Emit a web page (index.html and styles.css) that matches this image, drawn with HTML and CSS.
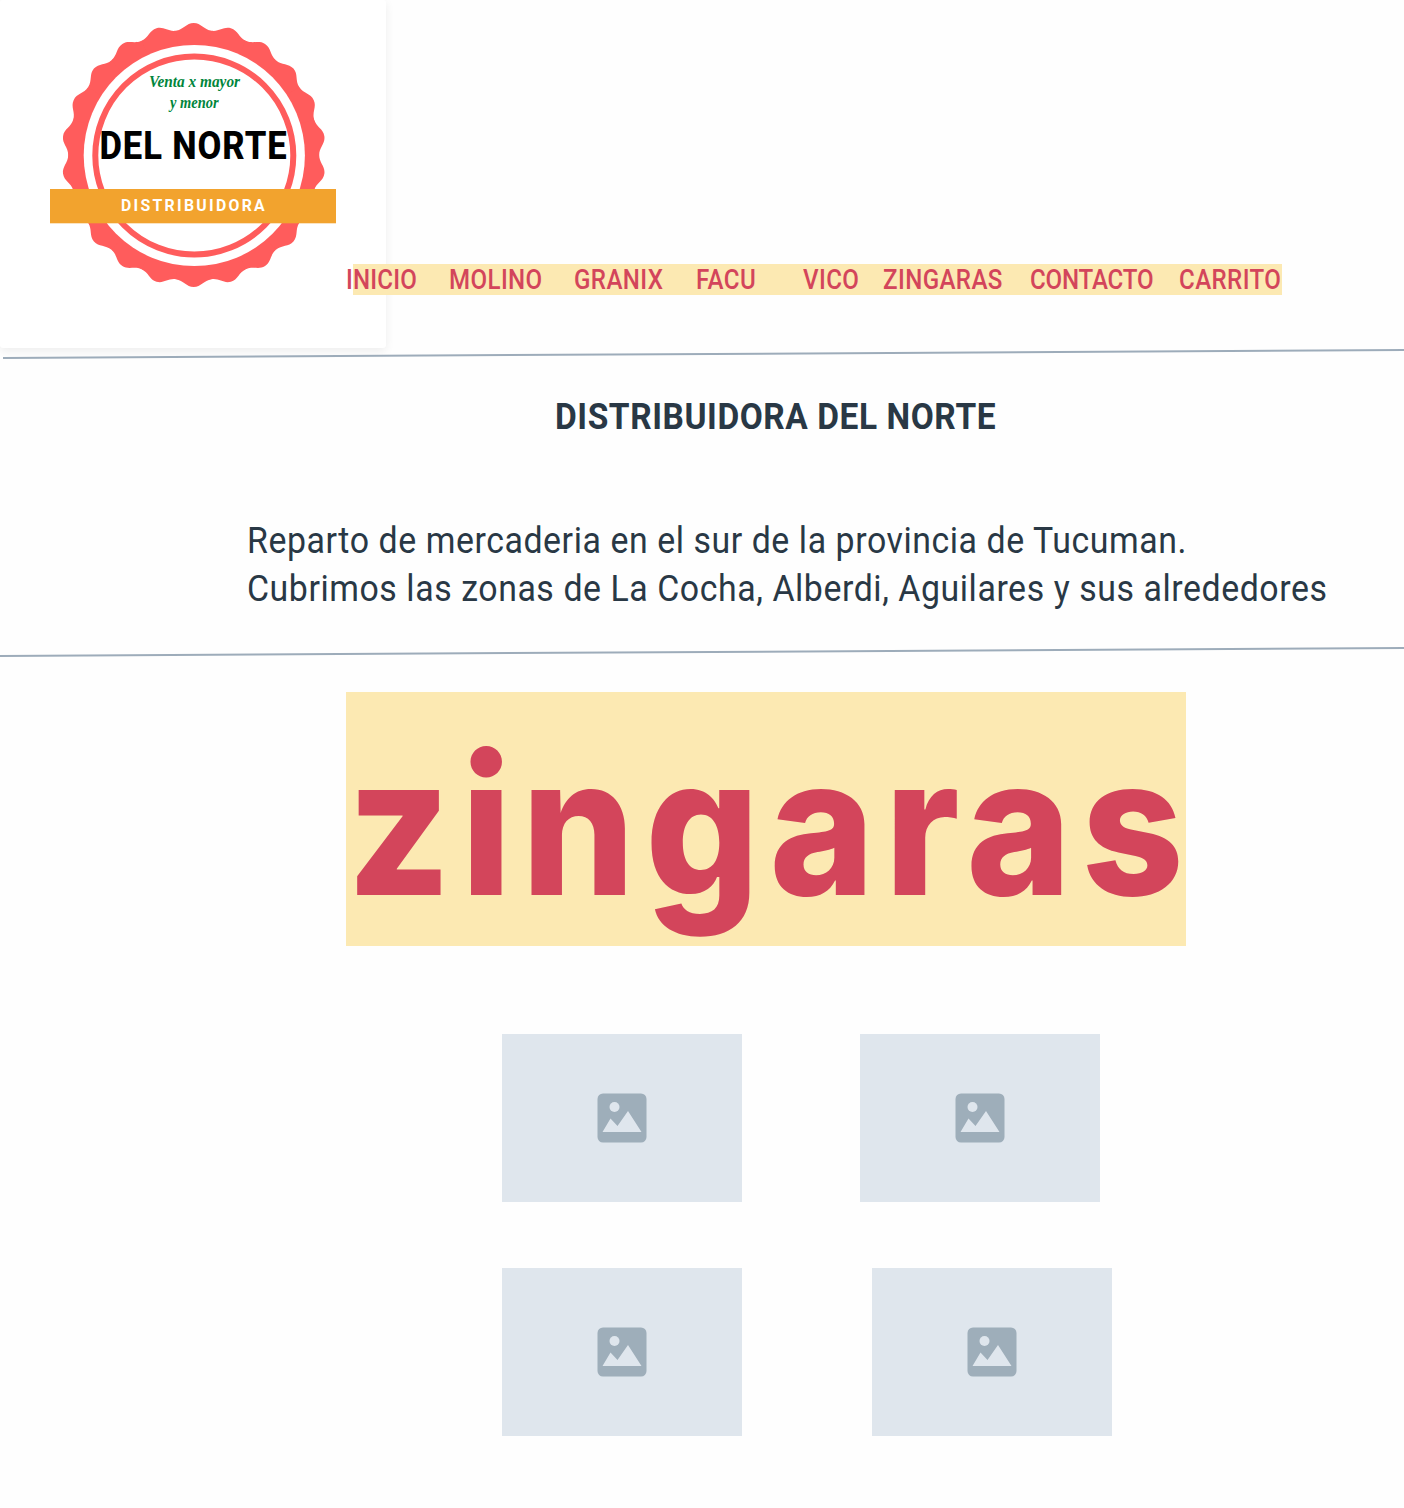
FILE: index.html
```html
<!DOCTYPE html>
<html lang="es">
<head>
<meta charset="utf-8">
<title>Distribuidora del Norte</title>
<link rel="stylesheet" href="styles.css">
</head>
<body>
<svg width="0" height="0" class="defs" aria-hidden="true">
  <symbol id="picture" viewBox="0 0 50 50">
    <rect x=".5" y=".5" width="49" height="49" rx="5.5" fill="#9eaeba"/>
    <circle cx="17.5" cy="14" r="5" fill="#dfe6ed"/>
    <path d="M5.5 39L13.5 25.5L20.5 33L31 18L44.5 39Z" fill="#dfe6ed"/>
  </symbol>
</svg>
<header class="header">
  <div class="logo">
    <svg width="386" height="348" viewBox="0 0 386 348">
      <defs><path id="lobe" d="M0 0L-17.9 -124.2C-10 -125.3 -7.500 -132 0 -132S10 -125.3 17.9 -124.2Z"/></defs>
      <g transform="translate(193.7 155)" fill="#ff5c5c">
        <circle r="125.300"/>
        <g id="half"><use href="#lobe"/><use href="#lobe" transform="rotate(16.3636)"/><use href="#lobe" transform="rotate(32.7273)"/><use href="#lobe" transform="rotate(49.0909)"/><use href="#lobe" transform="rotate(65.4545)"/><use href="#lobe" transform="rotate(81.8182)"/><use href="#lobe" transform="rotate(98.1818)"/><use href="#lobe" transform="rotate(114.5455)"/><use href="#lobe" transform="rotate(130.9091)"/><use href="#lobe" transform="rotate(147.2727)"/><use href="#lobe" transform="rotate(163.6364)"/></g>
        <use href="#half" transform="rotate(180)"/>
      </g>
      <circle cx="194.3" cy="155.5" r="110.6" fill="#fff"/>
      <circle cx="194.3" cy="155.5" r="99" fill="#fff" stroke="#ff5c5c" stroke-width="6"/>
      <g class="script">
        <text x="149" y="87" textLength="91" lengthAdjust="spacingAndGlyphs">Venta x mayor</text>
        <text x="170" y="108" textLength="48.500" lengthAdjust="spacingAndGlyphs">y menor</text>
      </g>
      <text class="brand" x="99.500" y="159.300" textLength="188" lengthAdjust="spacingAndGlyphs">DEL NORTE</text>
      <rect x="50" y="189" width="286" height="34.300" fill="#f2a32e"/>
      <text class="ribbon" x="121" y="211" textLength="146" lengthAdjust="spacingAndGlyphs">DISTRIBUIDORA</text>
    </svg>
  </div>
  <nav class="nav">
    <a>INICIO</a><a>MOLINO</a><a>GRANIX</a><a>FACU</a><a>VICO</a><a>ZINGARAS</a><a class="tight">CONTACTO</a><a>CARRITO</a>
  </nav>
</header>
<svg class="rule" width="1404" height="12"><path d="M3 10L1404 2" stroke="#9dacba" stroke-width="2"/></svg>
<section class="intro">
  <h1><span>DISTRIBUIDORA DEL NORTE</span></h1>
  <p><span class="line">Reparto de mercaderia en el sur de la provincia de Tucuman.</span>
  <span class="line">Cubrimos las zonas de La Cocha, Alberdi, Aguilares y sus alrededores</span></p>
</section>
<svg class="rule" width="1404" height="12"><path d="M0 10L1404 2" stroke="#9dacba" stroke-width="2"/></svg>
<h2 class="banner"><span>zingaras</span></h2>
<main class="gallery">
  <div class="row">
    <div class="photo"><svg><use href="#picture"/></svg></div>
    <div class="photo"><svg><use href="#picture"/></svg></div>
  </div>
  <div class="row wide">
    <div class="photo"><svg><use href="#picture"/></svg></div>
    <div class="photo"><svg><use href="#picture"/></svg></div>
  </div>
</main>
</body>
</html>
```
FILE: styles.css
```css
* { box-sizing: border-box; }
body { margin: 0; width: 1404px; height: 1508px; overflow: hidden; background: #fefefe; font-family: Roboto, "Liberation Sans", sans-serif; color: #293845; }
svg { display: block; }
.defs { display: none; }
.header { display: flex; height: 348px; }
.logo { width: 386px; height: 348px; background: #fff; border-radius: 3px; box-shadow: 0 3px 10px rgba(0, 0, 0, .07); }
.script { font: italic bold 16px "Liberation Serif", serif; fill: #00853c; }
.brand { font: 800 39.4px Roboto, sans-serif; letter-spacing: 1px; fill: #000; }
.ribbon { font: bold 17.3px Roboto, sans-serif; letter-spacing: 2.5px; fill: #fff; }
.nav { position: relative; margin: 263.5px 0 0 -33px; width: 928.5px; height: 31px; background: #fce9b2; display: grid; grid-template-columns: 96px 125px 122px 107px 80px 147px 149px 1fr; }
.nav a { font-size: 27.4px; line-height: 33px; letter-spacing: .45px; color: #d3455b; white-space: nowrap; transform: scaleX(.88); transform-origin: left; font-weight: 500; }
.nav a:first-child { margin-left: -7px; letter-spacing: .2px; }
.nav .tight { letter-spacing: -.2px; }
.rule { position: relative; }
.intro { height: 286px; overflow: hidden; }
h1 { margin: 35px 0 0 555px; font-size: 36px; line-height: 45px; font-weight: 700; white-space: nowrap; }
h1 span, .line { display: inline-block; transform-origin: left; white-space: nowrap; }
h1 span { transform: scaleX(.93); letter-spacing: .6px; }
.line { transform: scaleX(.94); letter-spacing: .61px; }
.intro p { margin: 77px 0 0 247px; font-size: 36px; line-height: 48px; display: flex; flex-direction: column; align-items: flex-start; }
.banner { margin: 34px 0 0 346px; width: 840px; height: 254px; background: #fce9b2; color: #d3455b; font-family: Inter, Roboto, sans-serif; font-size: 192px; font-weight: 800; line-height: 266px; white-space: nowrap; }
.banner span { display: inline-block; transform: scaleX(.93); transform-origin: left; letter-spacing: 10.9px; margin-left: 1px; }
.gallery { padding: 88px 0 0 502px; display: flex; flex-direction: column; gap: 66px; }
.row { display: flex; gap: 118px; }
.wide { gap: 130px; }
.photo { width: 240px; height: 168px; background: #dfe6ed; display: grid; place-items: center; }
.photo svg { width: 50px; height: 50px; }
```
